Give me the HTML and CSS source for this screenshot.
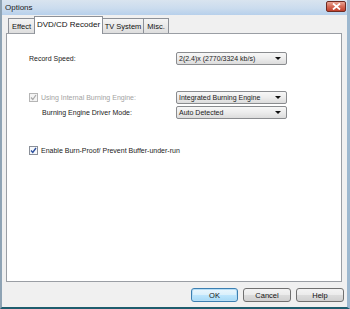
FILE: index.html
```html
<!DOCTYPE html>
<html>
<head>
<meta charset="utf-8">
<link rel="stylesheet" href="styles.css">
</head>
<body>
<div class="window">
  <div class="titlebar">
    <span class="title">Options</span>
    <span class="close">
      <svg width="9" height="7" viewBox="0 0 9 7"><path d="M1 0.5 L8 6.5 M8 0.5 L1 6.5" stroke="#fff" stroke-width="1.8"/></svg>
    </span>
  </div>
  <div class="tabs">
    <div class="tab t-effect">Effect</div>
    <div class="tab active t-dvd">DVD/CD Recoder</div>
    <div class="tab t-tv">TV System</div>
    <div class="tab t-misc">Misc.</div>
  </div>
  <div class="panel">
    <div class="row r1">
      <div class="label">Record Speed:</div>
      <div class="select"><span>2(2.4)x (2770/3324 kb/s)</span><i class="arrow"></i></div>
    </div>
    <div class="row r2">
      <div class="label check disabled">
        <svg class="cb" width="9" height="9" viewBox="0 0 9 9"><rect x="0.5" y="0.5" width="8" height="8" fill="#f4f4f4" stroke="#b5b5b5"/><path d="M2 4.5 L3.8 6.5 L7 2" fill="none" stroke="#a8a8a8" stroke-width="1.2"/></svg>
        <span>Using Internal Burning Engine:</span>
      </div>
      <div class="select"><span>Integrated Burning Engine</span><i class="arrow"></i></div>
    </div>
    <div class="row r3">
      <div class="label indent">Burning Engine Driver Mode:</div>
      <div class="select"><span>Auto Detected</span><i class="arrow"></i></div>
    </div>
    <div class="row r4">
      <div class="label check">
        <svg class="cb" width="9" height="9" viewBox="0 0 9 9"><rect x="0.5" y="0.5" width="8" height="8" fill="#f6f8fb" stroke="#8a8f98"/><path d="M2 4.5 L3.8 6.5 L7 2" fill="none" stroke="#2b4f9e" stroke-width="1.4"/></svg>
        <span>Enable Burn-Proof/ Prevent Buffer-under-run</span>
      </div>
    </div>
  </div>
  <div class="buttons">
    <div class="btn default">OK</div>
    <div class="btn">Cancel</div>
    <div class="btn">Help</div>
  </div>
</div>
</body>
</html>
```
FILE: styles.css
```css
html, body {
  margin: 0;
  padding: 0;
  width: 350px;
  height: 309px;
  overflow: hidden;
}
body {
  font-family: "Liberation Sans", Arial, sans-serif;
  font-size: 7px;
  color: #1a1a1a;
}
.window {
  box-sizing: border-box;
  width: 350px;
  height: 309px;
  background: #f0f0f0;
  border-left: 2px solid #8ea3b4;
  border-right: 3px solid #9db8cf;
  border-bottom: 2px solid #1f5d6e;
  display: flex;
  flex-direction: column;
}
.titlebar {
  height: 15px;
  flex: none;
  display: flex;
  align-items: center;
  justify-content: space-between;
  background: linear-gradient(#d9e4ef 0%, #cbdcee 55%, #b7d0eb 100%);
  padding: 0 1px 0 3px;
}
.title {
  font-size: 8px;
  color: #1d1d1d;
  margin-top: -1px;
}
.close {
  width: 18px;
  height: 9px;
  margin-top: -2px;
  border: 1px solid #6e2b22;
  border-radius: 2px;
  background: linear-gradient(#e9a393 0%, #d56a56 50%, #c1402c 100%);
  display: flex;
  align-items: center;
  justify-content: center;
}
.close svg { display: block; }
.tabs {
  height: 18px;
  flex: none;
  display: flex;
  align-items: flex-end;
  padding-left: 6px;
  position: relative;
  z-index: 2;
}
.tab {
  box-sizing: border-box;
  height: 15px;
  border: 1px solid #8d9198;
  border-bottom: none;
  background: linear-gradient(#f4f4f4, #dedede);
  display: flex;
  align-items: center;
  justify-content: center;
  margin-left: -1px;
  font-size: 7.5px;
  color: #111;
}
.t-effect { width: 27px; margin-left: 0; }
.t-dvd { width: 69px; }
.t-tv { width: 42px; }
.t-misc { width: 26px; }
.tab.active {
  height: 18px;
  margin-bottom: -1px;
  background: #fff;
  font-size: 8px;
  padding-bottom: 2px;
  position: relative;
}
.panel {
  flex: none;
  height: 249px;
  box-sizing: border-box;
  margin: 0 5px 0 4px;
  background: #fff;
  border: 1px solid #9a9ea4;
  padding: 18px 0 0 22px;
  display: flex;
  flex-direction: column;
}
.row {
  display: flex;
  align-items: center;
  height: 13px;
}
.r2 { margin-top: 26px; }
.r3 { margin-top: 2px; }
.r4 { margin-top: 25px; }
.label {
  width: 147px;
  flex: none;
  display: flex;
  align-items: center;
  white-space: nowrap;
}
.label.indent { padding-left: 13px; box-sizing: border-box; }
.label.check .cb { margin-right: 3px; flex: none; }
.label.disabled { color: #a3a3a3; }
.select {
  box-sizing: border-box;
  width: 111px;
  height: 13px;
  border: 1px solid #8a8c8f;
  border-radius: 2px;
  background: linear-gradient(#f7f7f7 0%, #ececec 50%, #dcdcdc 100%);
  display: flex;
  align-items: center;
  justify-content: space-between;
  padding: 0 5px 0 2px;
  white-space: nowrap;
}
.arrow {
  width: 0;
  height: 0;
  border-left: 3px solid transparent;
  border-right: 3px solid transparent;
  border-top: 3px solid #111;
}
.buttons {
  flex: none;
  display: flex;
  justify-content: flex-end;
  gap: 5px;
  padding: 6px 3px 0 0;
}
.btn {
  box-sizing: border-box;
  width: 48px;
  height: 14px;
  border: 1px solid #707070;
  border-radius: 3px;
  background: linear-gradient(#f3f3f3 0%, #ebebeb 50%, #dcdcdc 51%, #d0d0d0 100%);
  display: flex;
  align-items: center;
  justify-content: center;
  font-size: 7.5px;
  color: #111;
}
.btn.default {
  width: 47px;
  border-color: #3c7fb1;
  background: linear-gradient(#eaf6fd 0%, #d9f0fc 50%, #bee6fd 51%, #a7d9f5 100%);
  box-shadow: inset 0 0 0 1px #b6def6;
}
```
